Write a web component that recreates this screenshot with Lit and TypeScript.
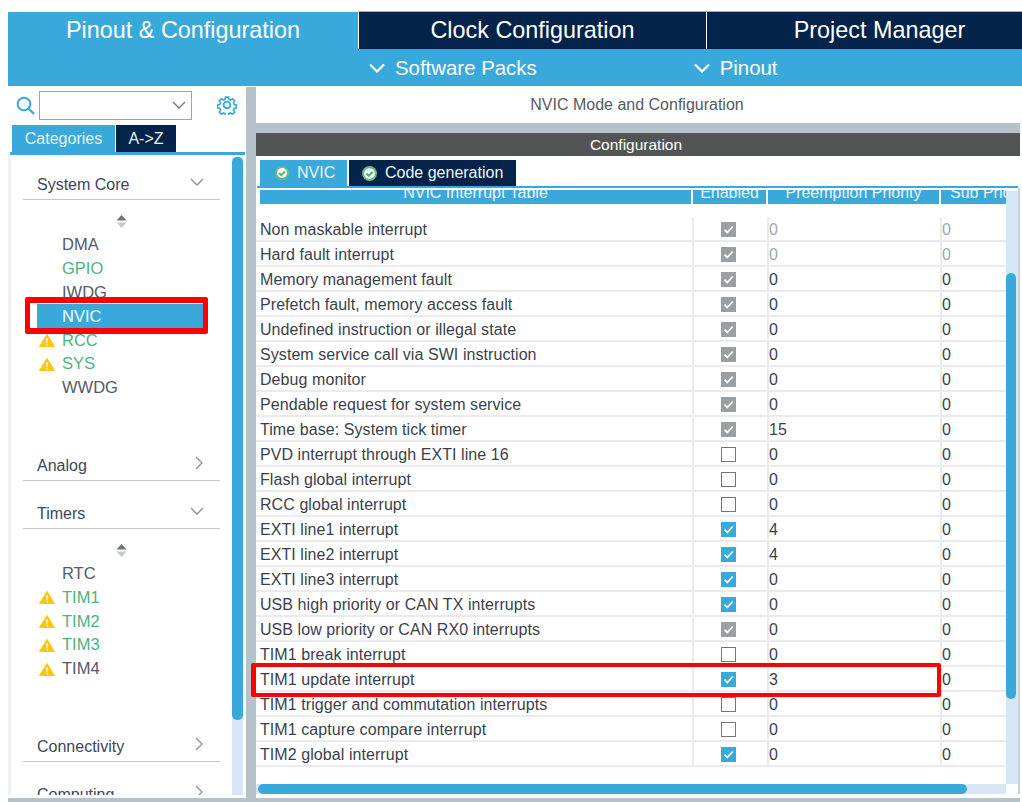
import { LitElement, css, html, svg } from 'lit';
import { customElement } from 'lit/decorators.js';

type Row = [name: string, state: 'locked' | 'on' | 'off', pre: string, sub: string, dim?: boolean];

const ROWS: Row[] = [
  ['Non maskable interrupt', 'locked', '0', '0', true],
  ['Hard fault interrupt', 'locked', '0', '0', true],
  ['Memory management fault', 'locked', '0', '0'],
  ['Prefetch fault, memory access fault', 'locked', '0', '0'],
  ['Undefined instruction or illegal state', 'locked', '0', '0'],
  ['System service call via SWI instruction', 'locked', '0', '0'],
  ['Debug monitor', 'locked', '0', '0'],
  ['Pendable request for system service', 'locked', '0', '0'],
  ['Time base: System tick timer', 'locked', '15', '0'],
  ['PVD interrupt through EXTI line 16', 'off', '0', '0'],
  ['Flash global interrupt', 'off', '0', '0'],
  ['RCC global interrupt', 'off', '0', '0'],
  ['EXTI line1 interrupt', 'on', '4', '0'],
  ['EXTI line2 interrupt', 'on', '4', '0'],
  ['EXTI line3 interrupt', 'on', '0', '0'],
  ['USB high priority or CAN TX interrupts', 'on', '0', '0'],
  ['USB low priority or CAN RX0 interrupts', 'locked', '0', '0'],
  ['TIM1 break interrupt', 'off', '0', '0'],
  ['TIM1 update interrupt', 'on', '3', '0'],
  ['TIM1 trigger and commutation interrupts', 'off', '0', '0'],
  ['TIM1 capture compare interrupt', 'off', '0', '0'],
  ['TIM2 global interrupt', 'on', '0', '0'],
];

const chevronDown = svg`<svg class="chev" width="14" height="9" viewBox="0 0 14 9"><path d="M1 1l6 6 6-6" fill="none" stroke="#8a8f94" stroke-width="1.3"/></svg>`;
const chevronRight = svg`<svg class="chev" width="9" height="14" viewBox="0 0 9 14"><path d="M1 1l6 6-6 6" fill="none" stroke="#8a8f94" stroke-width="1.3"/></svg>`;
const arrowDown = svg`<svg width="16" height="10" viewBox="0 0 16 10"><path d="M1 1.5l7 7 7-7" fill="none" stroke="#fff" stroke-width="2.2"/></svg>`;
const warn = svg`<svg class="warn" width="16" height="13" viewBox="0 0 17 14"><path d="M8.5 .5L16.6 13.5H.4z" fill="#fbc60d" stroke="#fbc60d" stroke-linejoin="round"/><path d="M8.5 4.5v5M8.5 10.5v1.6" stroke="#fff" stroke-width="1.6"/></svg>`;
const sortIcon = svg`<svg width="11" height="13" viewBox="0 0 11 13"><path d="M5.5 0L10.5 5.5H.5z" fill="#6f7478"/><path d="M5.5 13L.5 7.5H10.5z" fill="#c6c9cc"/></svg>`;
const okIcon = (size: number) =>
  svg`<svg width=${size} height=${size} viewBox="0 0 14 14"><circle cx="7" cy="7" r="7" fill="#62bd83"/><circle cx="7" cy="7" r="5" fill="#fff"/><path d="M4 7l2.2 2.2L10 5.6" fill="none" stroke="#4fb577" stroke-width="2"/></svg>`;
const tick = svg`<svg width="15" height="15" viewBox="0 0 15 15"><path d="M3.5 7.6l2.8 2.9 5.4-6" fill="none" stroke="#fff" stroke-width="1.8"/></svg>`;

@customElement('app-root')
export class AppRoot extends LitElement {
  static styles = css`
    :host {
      display: block;
      width: 1022px;
      height: 802px;
      box-sizing: border-box;
      padding: 12px 0 0 8px;
      background: #fff;
      font-family: 'Liberation Sans', Arial, sans-serif;
      overflow: hidden;
      position: relative;
      color: #3d4152;
    }
    .top-tabs {
      display: grid;
      grid-template-columns: 350px 348px 1fr;
      height: 37px;
      background: #39a9dc;
    }
    .top-tab {
      display: flex;
      align-items: center;
      justify-content: center;
      color: #fff;
      font-size: 23.4px;
      background: #03234b;
      padding-bottom: 1px;
      box-shadow: 0 -1px 0 #a4afb6;
    }
    .top-tab + .top-tab {
      border-left: 1px solid #fff;
    }
    .top-tab:last-child {
      padding-left: 30px;
    }
    .top-tab.active {
      background: #39a9dc;
      box-shadow: none;
    }
    .sub-bar {
      display: flex;
      height: 37px;
      box-sizing: border-box;
      background: #39a9dc;
      color: #fff;
      font-size: 20.4px;
      padding: 1px 0 0 361px;
    }
    .sub-item {
      display: flex;
      align-items: center;
      gap: 10px;
    }
    .sub-item + .sub-item {
      margin-left: 157px;
    }
    .body {
      display: grid;
      grid-template-columns: 238px 10px 764px;
      height: 715px;
      margin-top: 1px;
    }
    .sep {
      background: #b6c2c9;
    }

    /* left panel */
    .left {
      display: flex;
      flex-direction: column;
      overflow: hidden;
      border-bottom: 4px solid #b6c2c9;
      padding-bottom: 3px;
      box-sizing: border-box;
    }
    .search {
      display: flex;
      align-items: center;
      height: 34px;
      padding: 3px 0 1px 8px;
      box-sizing: border-box;
    }
    .select {
      width: 153px;
      height: 29px;
      box-sizing: border-box;
      border: 1px solid #a2a5a8;
      margin-left: 4px;
      display: flex;
      align-items: center;
      justify-content: flex-end;
      padding-right: 5px;
    }
    .gear {
      margin-left: 25px;
    }
    .cat-tabs {
      display: flex;
      gap: 1px;
      padding-left: 4px;
      margin-top: 4px;
      height: 27px;
      font-size: 16px;
      color: #e8f4fb;
    }
    .cat-tabs div {
      display: flex;
      align-items: center;
      justify-content: center;
      background: #03234b;
      width: 60px;
    }
    .cat-tabs .active {
      background: #39a9dc;
      width: 103px;
    }
    .cat-line {
      height: 3px;
      margin: 0 1px 0 2px;
      background: #39a9dc;
    }
    .cat-body {
      flex: 1;
      display: grid;
      grid-template-columns: 221px 11px;
      border-left: 3px solid #eef0f2;
      overflow: hidden;
      min-height: 0;
    }
    .tree {
      padding: 16px 0 0 12px;
      overflow: hidden;
    }
    .sec {
      display: flex;
      justify-content: space-between;
      align-items: center;
      width: 197px;
      height: 29px;
      box-sizing: border-box;
      padding: 0 16px 0 14px;
      border-bottom: 1px solid #c3c8cc;
      font-size: 16px;
      color: #3e4560;
    }
    .sec .chev {
      margin-top: -5px;
    }
    .sec.analog {
      margin-top: 52px;
    }
    .sec.timers {
      margin-top: 19px;
    }
    .sec.connectivity {
      margin-top: 52px;
    }
    .sec.computing {
      margin-top: 19px;
    }
    .sort {
      display: flex;
      justify-content: center;
      width: 197px;
      margin-top: 15px;
      height: 15px;
    }
    .items {
      margin-top: 3px;
    }
    .item {
      display: flex;
      align-items: center;
      height: 23.8px;
      font-size: 16.5px;
      color: #555a66;
      padding-left: 39px;
      position: relative;
      width: 197px;
      box-sizing: border-box;
    }
    .item.green {
      color: #4fb37c;
    }
    .item.sel {
      background: #39a9dc;
      color: #fff;
      margin-left: 14px;
      width: 166px;
      padding-left: 25px;
    }
    .item .warn {
      position: absolute;
      left: 16px;
      top: 6px;
    }
    .track {
      background: #d6e6f4;
    }
    .cat-track {
      margin-top: 2px;
    }
    .v-thumb {
      background: #39a9dc;
      border-radius: 5px;
    }
    .left-thumb {
      height: 563px;
    }

    /* right panel */
    .right {
      display: flex;
      flex-direction: column;
      min-width: 0;
      overflow: hidden;
      border-bottom: 4px solid #b6c2c9;
      padding-bottom: 4px;
      box-sizing: border-box;
    }
    .mode {
      height: 36px;
      display: flex;
      align-items: center;
      justify-content: center;
      padding-right: 2px;
      font-size: 16px;
      color: #555a60;
      flex: none;
    }
    .gap {
      height: 10px;
      background: #b6c2c9;
      flex: none;
    }
    .conf {
      height: 23px;
      flex: none;
      background: #535554;
      color: #fff;
      font-size: 15.5px;
      display: flex;
      align-items: center;
      justify-content: center;
      padding-right: 4px;
    }
    .sub-tabs {
      display: flex;
      margin: 4px 0 0 4px;
      height: 26px;
      flex: none;
      color: #f0f7fb;
      font-size: 16px;
    }
    .sub-tabs div {
      display: flex;
      align-items: center;
      gap: 8px;
      background: #03234b;
      padding-left: 13px;
      width: 167px;
      box-sizing: border-box;
      margin-left: 2px;
    }
    .sub-tabs .active {
      background: #39a9dc;
      width: 87px;
      margin: 0;
      padding-left: 15px;
    }
    .sub-line {
      height: 2px;
      flex: none;
      margin: 0 2px 0 1px;
      background: #39a9dc;
    }
    .table-wrap {
      flex: 1;
      min-height: 0;
      display: grid;
      grid-template-columns: 750px 12px;
      grid-template-rows: 1fr 10px;
      border-right: 2px solid #c9d2d8;
    }
    .table {
      overflow: hidden;
      padding-top: 2px;
    }
    .head,
    .row {
      display: grid;
      grid-template-columns: 436px 75px 173px 66px;
    }
    .head {
      height: 14px;
      margin-bottom: 13px;
      overflow: hidden;
    }
    .head div {
      background: #39a9dc;
      color: #e8f4fb;
      font-size: 16px;
      line-height: 6px;
      text-align: center;
      margin: 0 1px;
      overflow: hidden;
      white-space: nowrap;
    }
    .head div:first-child {
      margin-left: 4px;
    }
    .head div:last-child {
      margin-right: 0;
      text-align: left;
      padding-left: 9px;
    }
    .row {
      height: 25px;
      font-size: 16px;
      color: #3b3f4c;
      box-sizing: border-box;
      border-bottom: 2px solid #e9ebee;
    }
    .row > div {
      display: flex;
      align-items: center;
      padding-top: 2px;
      border-left: 2px solid #e9ebee;
      box-sizing: border-box;
    }
    .row > div:first-child {
      border-left: 0;
      padding-left: 4px;
      white-space: nowrap;
      letter-spacing: 0.07px;
    }
    .row .en {
      justify-content: center;
    }
    .row .dim {
      color: #a3a8ac;
    }
    .cb {
      width: 15px;
      height: 15px;
      box-sizing: border-box;
      display: block;
      margin-left: -4px;
    }
    .cb.locked {
      background: #9a9fa3;
    }
    .cb.on {
      background: #39a9dc;
    }
    .cb.off {
      border: 1.5px solid #767676;
      background: #fff;
    }
    .vbar {
      margin-top: 3px;
      padding-top: 82px;
    }
    .vbar .v-thumb {
      width: 10px;
      height: 426px;
    }
    .hbar {
      padding-left: 2px;
    }
    .hbar .h-thumb {
      background: #39a9dc;
      height: 10px;
      width: 709px;
      border-radius: 5px;
    }
    .box {
      position: absolute;
      box-sizing: border-box;
      border: 4px solid #fe0000;
      border-radius: 2px;
    }
    .box-nvic {
      left: 25px;
      top: 297px;
      width: 183px;
      height: 37px;
      border-width: 6px 5px;
    }
    .box-tim {
      left: 251px;
      top: 663px;
      width: 690px;
      height: 34px;
      border-left-width: 5px;
    }
  `;

  private _renderCheck(state: Row[1]) {
    return html`<span class="cb ${state}">${state === 'off' ? '' : tick}</span>`;
  }

  private _renderRow(r: Row) {
    return html`<div class="row">
      <div>${r[0]}</div>
      <div class="en">${this._renderCheck(r[1])}</div>
      <div class=${r[4] ? 'dim' : ''}>${r[2]}</div>
      <div class=${r[4] ? 'dim' : ''}>${r[3]}</div>
    </div>`;
  }

  private _item(name: string, opts: { green?: boolean; warn?: boolean; sel?: boolean } = {}) {
    return html`<div class="item ${opts.green ? 'green' : ''} ${opts.sel ? 'sel' : ''}">
      ${opts.warn ? warn : ''}${name}
    </div>`;
  }

  render() {
    return html`
      <div class="top-tabs">
        <div class="top-tab active">Pinout &amp; Configuration</div>
        <div class="top-tab">Clock Configuration</div>
        <div class="top-tab">Project Manager</div>
      </div>
      <div class="sub-bar">
        <div class="sub-item">${arrowDown}Software Packs</div>
        <div class="sub-item">${arrowDown}Pinout</div>
      </div>
      <div class="body">
        <div class="left">
          <div class="search">
            <svg width="19" height="19" viewBox="0 0 19 19">
              <circle cx="8" cy="8" r="6.3" fill="none" stroke="#39a9dc" stroke-width="2"/>
              <path d="M12.5 12.5l5.5 5.5" stroke="#39a9dc" stroke-width="2.4"/>
            </svg>
            <div class="select">
              <svg width="14" height="9" viewBox="0 0 14 9"><path d="M1 1l6 6 6-6" fill="none" stroke="#777" stroke-width="1.4"/></svg>
            </div>
            <svg class="gear" width="20" height="20" viewBox="0 0 24 24">
              <path d="M10 1.5h4l.6 3 2.2.9 2.6-1.7 2.9 2.9-1.7 2.6.9 2.2 3 .6v4l-3 .6-.9 2.2 1.7 2.6-2.9 2.9-2.6-1.7-2.2.9-.6 3h-4l-.6-3-2.2-.9-2.6 1.7-2.9-2.9 1.7-2.6-.9-2.2-3-.6v-4l3-.6.9-2.2-1.7-2.6 2.9-2.9 2.6 1.7 2.2-.9z" transform="translate(1.2 1.2) scale(.9)" fill="none" stroke="#39a9dc" stroke-width="2.2"/>
              <circle cx="12" cy="12" r="4" fill="none" stroke="#39a9dc" stroke-width="2.2"/>
            </svg>
          </div>
          <div class="cat-tabs">
            <div class="active">Categories</div>
            <div>A-&gt;Z</div>
          </div>
          <div class="cat-line"></div>
          <div class="cat-body">
            <div class="tree">
              <div class="sec">System Core ${chevronDown}</div>
              <div class="sort">${sortIcon}</div>
              <div class="items">
                ${this._item('DMA')}
                ${this._item('GPIO', { green: true })}
                ${this._item('IWDG')}
                ${this._item('NVIC', { sel: true })}
                ${this._item('RCC', { green: true, warn: true })}
                ${this._item('SYS', { green: true, warn: true })}
                ${this._item('WWDG')}
              </div>
              <div class="sec analog">Analog ${chevronRight}</div>
              <div class="sec timers">Timers ${chevronDown}</div>
              <div class="sort">${sortIcon}</div>
              <div class="items">
                ${this._item('RTC')}
                ${this._item('TIM1', { green: true, warn: true })}
                ${this._item('TIM2', { green: true, warn: true })}
                ${this._item('TIM3', { green: true, warn: true })}
                ${this._item('TIM4', { warn: true })}
              </div>
              <div class="sec connectivity">Connectivity ${chevronRight}</div>
              <div class="sec computing">Computing ${chevronRight}</div>
            </div>
            <div class="track cat-track"><div class="v-thumb left-thumb"></div></div>
          </div>
        </div>
        <div class="sep"></div>
        <div class="right">
          <div class="mode">NVIC Mode and Configuration</div>
          <div class="gap"></div>
          <div class="conf">Configuration</div>
          <div class="sub-tabs">
            <div class="active">${okIcon(14)}NVIC</div>
            <div>${okIcon(15)}Code generation</div>
          </div>
          <div class="sub-line"></div>
          <div class="table-wrap">
            <div class="table">
              <div class="head">
                <div>NVIC Interrupt Table</div>
                <div>Enabled</div>
                <div>Preemption Priority</div>
                <div>Sub Priority</div>
              </div>
              ${ROWS.map((r) => this._renderRow(r))}
            </div>
            <div class="track vbar"><div class="v-thumb"></div></div>
            <div class="track hbar"><div class="h-thumb"></div></div>
          </div>
        </div>
      </div>
      <div class="box box-nvic"></div>
      <div class="box box-tim"></div>
    `;
  }
}
